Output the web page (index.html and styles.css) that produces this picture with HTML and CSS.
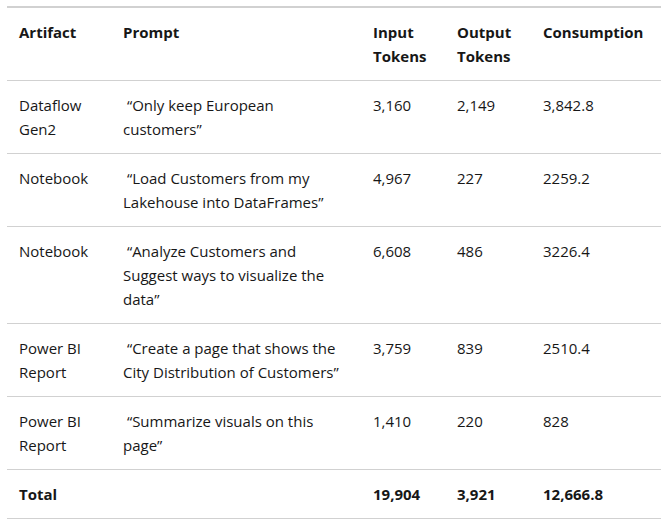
FILE: index.html
```html
<!DOCTYPE html>
<html>
<head>
<meta charset="utf-8">
<link rel="stylesheet" href="styles.css">
</head>
<body>
<div class="wrap">
<table class="usage">
  <colgroup>
    <col class="c1"><col class="c2"><col class="c3"><col class="c4"><col class="c5">
  </colgroup>
  <thead>
    <tr><th>Artifact</th><th>Prompt</th><th>Input Tokens</th><th>Output Tokens</th><th>Consumption</th></tr>
  </thead>
  <tbody>
    <tr><td>Dataflow Gen2</td><td>&nbsp;“Only keep European customers”</td><td>3,160</td><td>2,149</td><td>3,842.8</td></tr>
    <tr><td>Notebook</td><td>&nbsp;“Load Customers from my Lakehouse into DataFrames”</td><td>4,967</td><td>227</td><td>2259.2</td></tr>
    <tr><td>Notebook</td><td>&nbsp;“Analyze Customers and Suggest ways to visualize the data”</td><td>6,608</td><td>486</td><td>3226.4</td></tr>
    <tr><td>Power BI Report</td><td>&nbsp;“Create a page that shows the City Distribution of Customers”</td><td>3,759</td><td>839</td><td>2510.4</td></tr>
    <tr><td>Power BI Report</td><td>&nbsp;“Summarize visuals on this page”</td><td>1,410</td><td>220</td><td>828</td></tr>
    <tr class="total"><td>Total</td><td></td><td>19,904</td><td>3,921</td><td>12,666.8</td></tr>
  </tbody>
</table>
</div>
</body>
</html>
```
FILE: styles.css
```css
html, body {
  margin: 0;
  background: #ffffff;
}
.wrap {
  padding: 6px 11px 0 7px;
}
.usage {
  width: 100%;
  border-collapse: collapse;
  table-layout: fixed;
  font-family: "Open Sans", "Noto Sans", sans-serif;
  font-size: 15px;
  line-height: 24px;
  color: #171717;
  border-top: 2px solid #d1d1d1;
}
.c1 { width: 104px; }
.c2 { width: 250px; }
.c3 { width: 84px; }
.c4 { width: 86px; }
.c5 { width: auto; }
.usage th, .usage td {
  text-align: left;
  vertical-align: top;
  padding: 12px 12px 12px 12px;
  border-bottom: 1px solid #d1d1d1;
}
.usage th {
  font-weight: 700;
}
.usage .total td {
  font-weight: 700;
}
```
